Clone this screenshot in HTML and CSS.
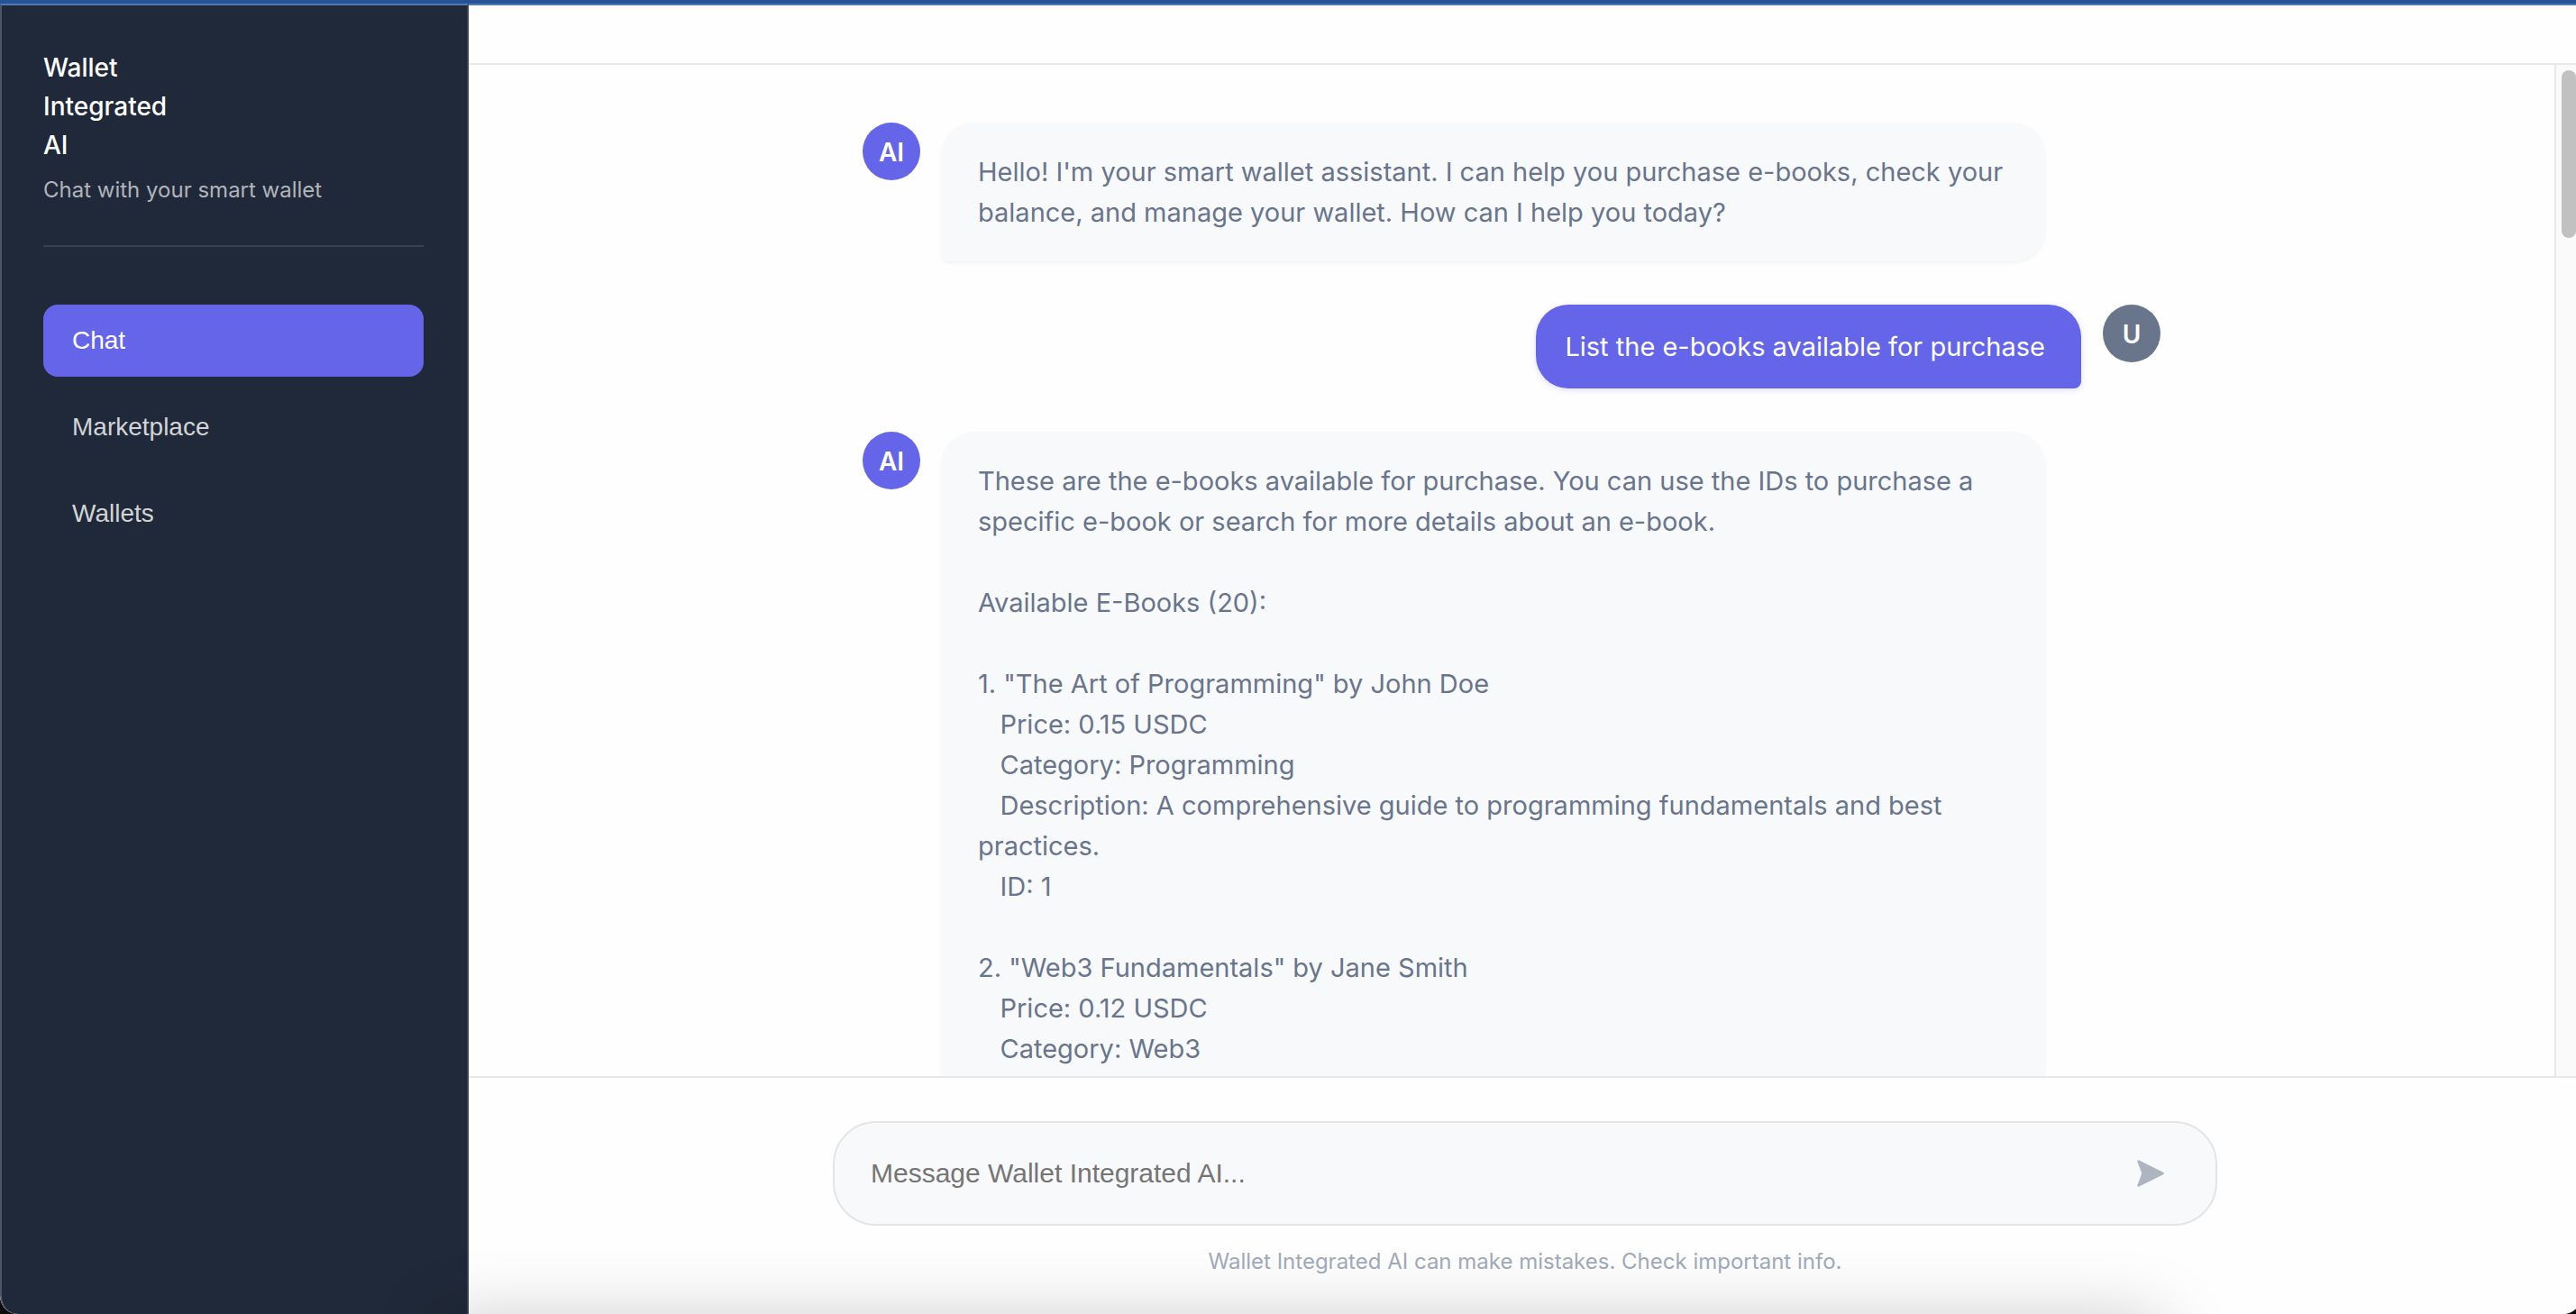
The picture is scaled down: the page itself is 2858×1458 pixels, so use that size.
FILE: index.html
```html
<!DOCTYPE html>
<html lang="en">
    <head>
        <meta charset="UTF-8">
        <meta name="viewport" content="width=device-width, initial-scale=1.0">
        <title>Wallet Integrated AI</title>
        <link rel="stylesheet" href="styles.css">
    </head>

    <body>

        <div class="app">

            <!-- Sidebar -->
            <aside class="sidebar">

                <div class="sidebar-header">
                    <h1>Wallet<br>Integrated<br>AI</h1>
                    <p>Chat with your smart wallet</p>
                </div>

                <nav class="nav">
                    <button class="nav-btn active" type="button">Chat</button>
                    <button class="nav-btn" type="button">Marketplace</button>
                    <button class="nav-btn" type="button">Wallets</button>
                </nav>

            </aside>

            <!-- Chat -->
            <main class="main">

                <header class="chat-header"></header>

                <div class="chat">

                    <div class="messages">
                        <div class="message-list">

                            <div class="message">
                                <div class="avatar">AI</div>
                                <div class="bubble">Hello! I'm your smart wallet assistant. I can help you purchase e-books, check your balance, and manage your wallet. How can I help you today?</div>
                            </div>

                            <div class="message user">
                                <div class="avatar">U</div>
                                <div class="bubble">List the e-books available for purchase</div>
                            </div>

                            <div class="message">
                                <div class="avatar">AI</div>
                                <div class="bubble">These are the e-books available for purchase. You can use the IDs to purchase a specific e-book or search for more details about an e-book.

Available E-Books (20):

1. "The Art of Programming" by John Doe
   Price: 0.15 USDC
   Category: Programming
   Description: A comprehensive guide to programming fundamentals and best practices.
   ID: 1

2. "Web3 Fundamentals" by Jane Smith
   Price: 0.12 USDC
   Category: Web3
</div>
                            </div>

                        </div>
                    </div>

                    <div class="scrollbar"><div class="thumb"></div></div>

                </div>

                <footer class="composer">
                    <form class="input-box">
                        <input type="text" placeholder="Message Wallet Integrated AI..." aria-label="Message">
                        <button class="send-btn" type="button" aria-label="Send">
                            <svg viewBox="0 0 30 30" width="30" height="30">
                                <path d="M1.9.2 29 13.8Q30.6 15 29 16.2L1.9 29.8Q-.2 30 .4 28L4.8 16.6Q5.2 15 4.8 13.4L.4 2Q-.2 0 1.9.2Z" fill="currentColor"/>
                            </svg>
                        </button>
                    </form>
                    <p class="note">Wallet Integrated AI can make mistakes. Check important info.</p>
                </footer>

            </main>

        </div>

        <div class="dock-shadow"></div>

    </body>
</html>
```
FILE: styles.css
```css
* {
    box-sizing: border-box;
    margin: 0;
    padding: 0;
}

body {
    height: 100vh;
    overflow: hidden;
    background: #0c0c0c;
    font-family: Inter, "Liberation Sans", sans-serif;
    font-size: 28px;
}

button, input {
    font-family: "Liberation Sans", Arial, sans-serif;
    border: none;
    background: none;
}

/* the window runs a little past the right edge */
.app {
    display: flex;
    width: calc(100% + 6px);
    height: 100vh;
    overflow: hidden;
    background: #fefefe;
    border-top: 4px solid #285296;
    border-radius: 0 0 20px 20px;
}

/* Sidebar */
.sidebar {
    flex: none;
    width: 520px;
    padding: 48px 48px 48px 46px;
    background: #202939;
    border-left: 2px solid #4b5563;
    border-right: 2px solid #374151;
    border-top: 2px solid #4f7ab4;
    border-bottom-left-radius: 20px;
}

.sidebar-header {
    padding-bottom: 42px;
    margin-bottom: 64px;
    border-bottom: 2px solid #374151;
}

.sidebar-header h1 {
    color: #fff;
    font-size: 28px;
    font-weight: 500;
    line-height: 43px;
}

.sidebar-header p {
    margin-top: 8px;
    color: #b1b4ba;
    font-size: 24px;
    line-height: 39px;
}

.nav {
    display: flex;
    flex-direction: column;
    gap: 16px;
}

.nav-btn {
    height: 80px;
    padding: 0 32px;
    border-radius: 16px;
    color: #d2d4d7;
    font-size: 28px;
    text-align: left;
}

.nav-btn.active {
    background: #6565e9;
    color: #fff;
}

/* Chat */
.main {
    flex: 1;
    display: flex;
    flex-direction: column;
    min-width: 0;
    border-top: 2px solid #4f7ab4;
}

.chat-header {
    flex: none;
    height: 66px;
    border-bottom: 2px solid #e8e8e8;
}

.chat {
    flex: 1;
    display: flex;
    min-height: 0;
}

.messages {
    flex: 1;
    padding-top: 64px;
    overflow: hidden;
}

.message-list {
    display: flex;
    flex-direction: column;
    gap: 48px;
    max-width: 1440px;
    margin: 0 auto;
}

.message {
    display: flex;
    align-items: flex-start;
    gap: 24px;
}

.message.user {
    flex-direction: row-reverse;
}

.avatar {
    flex: none;
    width: 64px;
    height: 64px;
    border-radius: 50%;
    background: #6565e9;
    color: #fff;
    font-size: 28px;
    font-weight: 600;
    line-height: 66px;
    text-align: center;
}

.user .avatar {
    background: #68758a;
}

.bubble {
    max-width: 85%;
    padding: 32px 40px;
    border-radius: 36px 36px 36px 8px;
    background: #f8f9fb;
    box-shadow: 0 2px 4px rgba(0, 0, 0, 0.05);
    color: #68758c;
    font-size: 29px;
    line-height: 45px;
    white-space: pre-wrap;
}

.user .bubble {
    padding: 24px 40px 24px 32px;
    border-radius: 36px 36px 8px 36px;
    background: #6565e9;
    box-shadow: 0 2px 6px rgba(101, 101, 233, 0.2);
    color: #fff;
}

.scrollbar {
    flex: none;
    width: 30px;
    padding: 6px;
    background: #fafafa;
    border-left: 2px solid #e8e8e8;
}

.thumb {
    width: 16px;
    height: 186px;
    border-radius: 8px;
    background: #c1c1c1;
}

/* Message box */
.composer {
    flex: none;
    height: 264px;
    padding-top: 48px;
    border-top: 2px solid #e8e8e8;
}

.input-box {
    display: flex;
    align-items: center;
    max-width: 1536px;
    height: 116px;
    margin: 0 auto;
    padding: 0 44px 0 40px;
    background: #f8f9fb;
    border: 2px solid #e3e4e5;
    border-radius: 48px;
}

.input-box input {
    flex: 1;
    height: 64px;
    font-size: 30px;
    outline: none;
}

.input-box input::placeholder {
    color: #757575;
}

.send-btn {
    display: flex;
    align-items: center;
    justify-content: center;
    width: 56px;
    height: 56px;
    color: #adb5c0;
}

.note {
    margin-top: 20px;
    color: #a1abba;
    font-size: 24px;
    line-height: 39px;
    text-align: center;
}

/* soft shadow coming up from below the window */
.dock-shadow {
    position: fixed;
    top: calc(100% + 8px);
    left: 490px;
    right: 460px;
    height: 120px;
    box-shadow: 0 0 80px rgba(0, 0, 0, 0.22);
    pointer-events: none;
}
```
